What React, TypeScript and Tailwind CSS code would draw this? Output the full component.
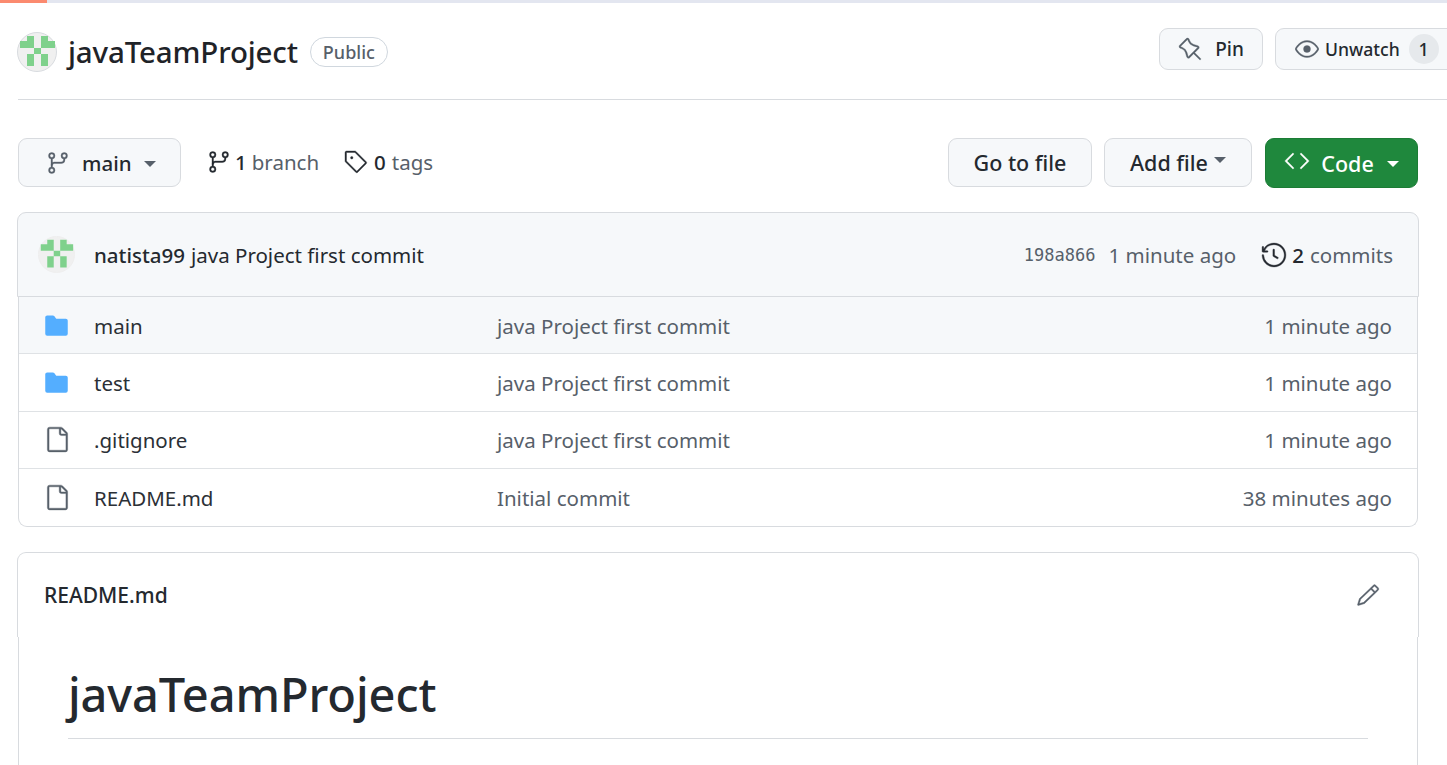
import React from "react";
import { GoGitBranch, GoTag, GoHistory, GoPin, GoEye, GoCode, GoPencil, GoFile, GoFileDirectoryFill } from "react-icons/go";

const Avatar = ({ size, ring = true }: { size: number; ring?: boolean }) => (
  <svg width={size} height={size} viewBox="0 0 40 40" className="shrink-0">
    <circle cx="20" cy="20" r="19.5" fill="#f0f0f0" stroke={ring ? "#d8dbdf" : "#eeeeee"} />
    <path d="M10 4h7v12H3V9h7zM24 4h7v5h7v7H24zM17 16h7v6h-7zM10 22h7v12h-7zM24 22h7v12h-7z" fill="#7fd18c" />
  </svg>
);

const Caret = ({ color = "#24292f" }: { color?: string }) => (
  <span className="inline-block h-0 w-0 border-x-[6px] border-t-[6px] border-x-transparent" style={{ borderTopColor: color }} />
);

const rows = [
  { name: "main", dir: true, msg: "java Project first commit", time: "1 minute ago", shaded: true },
  { name: "test", dir: true, msg: "java Project first commit", time: "1 minute ago" },
  { name: ".gitignore", dir: false, msg: "java Project first commit", time: "1 minute ago" },
  { name: "README.md", dir: false, msg: "Initial commit", time: "38 minutes ago" },
];

const btn = "flex items-center rounded-[9px] border border-[#d8dbdf] bg-[#f6f8fa] text-[#24292f]";
const bold = "stroke-current stroke-[0.35]";

export default function App() {
  return (
    <div className="h-[765px] w-full overflow-hidden bg-white font-['Noto_Sans',sans-serif] text-[20.5px] text-[#24292f]">
      <div className="h-[3px] bg-[#e3e6f0]">
        <div className="h-[3px] w-[47px] bg-[#fb8a6f]" />
      </div>

      <div className="ml-[18px] flex h-[97px] items-start justify-between border-b border-[#d8dbdf] pt-[25px]">
        <div className="ml-[-1px] flex h-[48px] items-center">
          <Avatar size={40} />
          <span className="ml-[11px] text-[29.5px] font-medium leading-none tracking-[-0.15px] text-[#1f2328]">javaTeamProject</span>
          <span className="ml-[12px] flex h-[30px] items-center rounded-full border border-[#d0d7de] px-[12px] text-[18px] font-medium text-[#57606a]">Public</span>
        </div>
        <div className="mr-[-40px] flex shrink-0 gap-[12px]">
          <div className={`${btn} h-[42px] w-[104px] justify-center gap-[12px]`}>
            <GoPin size={25} className={`text-[#57606a] ${bold}`} />
            <span className="text-[19px] font-medium">Pin</span>
          </div>
          <div className={`${btn} h-[42px] w-[212px] pl-[19px]`}>
            <GoEye size={24} className={`text-[#57606a] ${bold}`} />
            <span className="ml-[6px] text-[17.6px] font-medium">Unwatch</span>
            <span className="ml-[9px] flex h-[30px] w-[30px] items-center justify-center rounded-full bg-[#e6e9ec] text-[18px] font-medium">1</span>
          </div>
        </div>
      </div>

      <div className="ml-[17px] mr-[29px] mt-[38px] flex h-[50px] items-start justify-between">
        <div className="flex items-start">
          <div className={`${btn} ml-px h-[49px] w-[163px] pl-[27px]`}>
            <GoGitBranch size={24} className={`text-[#57606a] ${bold}`} />
            <span className="ml-[12px] pt-[1px] font-medium">main</span>
            <span className="ml-[12px] mt-[3px] flex"><Caret color="#57606a" /></span>
          </div>
          <div className="ml-[26px] flex h-[49px] items-center">
            <GoGitBranch size={24} className={`mb-[2px] text-[#24292f] ${bold}`} />
            <span className="ml-[4px] font-medium">1</span>
            <span className="ml-[5px] text-[#57606a]">branch</span>
          </div>
          <div className="ml-[25px] flex h-[49px] items-center">
            <GoTag size={24} className={`mb-[2px] text-[#24292f] ${bold}`} />
            <span className="ml-[6px] font-medium">0</span>
            <span className="ml-[6px] text-[#57606a]">tags</span>
          </div>
        </div>
        <div className="flex gap-[12px] text-[21.5px]">
          <div className={`${btn} h-[49px] w-[144px] justify-center pt-[2px] font-medium`}>Go to file</div>
          <div className={`${btn} h-[49px] w-[148px] justify-center gap-[6px] pt-[2px] font-medium`}>
            <span>Add file</span>
            <span className="mb-[7px] flex"><Caret color="#57606a" /></span>
          </div>
          <div className="ml-px flex h-[50px] w-[153px] items-center justify-center rounded-[9px] border border-[#1c7c35] bg-[#1f883d] pt-[2px] font-medium text-white">
            <GoCode size={26} className={`mb-[7px] ${bold}`} />
            <span className="ml-[11px]">Code</span>
            <span className="ml-[13px] flex"><Caret color="#ffffff" /></span>
          </div>
        </div>
      </div>

      <div className="ml-[17px] mr-[28px] mt-[24px] flex h-[85px] items-center rounded-t-[9px] border border-[#d8dbdf] bg-[#f6f8fa] pl-[20px] pr-[25px]">
        <Avatar size={37} ring={false} />
        <span className="ml-[19px] pt-[1px] font-medium">natista99</span>
        <span className="ml-[6px] pt-[1px]">java Project first commit</span>
        <span className="ml-auto pt-[2px] font-['DejaVu_Sans_Mono',monospace] text-[17px] text-[#57606a]">198a866</span>
        <span className="ml-[13px] pt-[1px] text-[#57606a]">1 minute ago</span>
        <GoHistory size={26} className={`ml-[25px] text-[#24292f] ${bold}`} />
        <span className="ml-[5px] pt-[1px] font-medium">2</span>
        <span className="ml-[6px] pt-[1px] text-[#57606a]">commits</span>
      </div>

      <div className="ml-[18px] mr-[29px] rounded-b-[9px] border-x border-b border-[#d8dbdf]">
        {rows.map((r, i) => (
          <div
            key={r.name}
            className={`flex h-[57.3px] items-center pl-[25px] pr-[25px] ${i < rows.length - 1 ? "border-b border-[#dfe2e5]" : ""} ${r.shaded ? "bg-[#f6f8fa]" : ""}`}
          >
            <span className={`flex w-[50px] shrink-0 ${r.dir ? "" : "pl-[1px]"}`}>
              {r.dir ? (
                <GoFileDirectoryFill size={27} className="ml-[-1px] text-[#54aeff]" />
              ) : (
                <GoFile size={27} className={`ml-[-1px] text-[#57606a] ${bold}`} />
              )}
            </span>
            <span className="w-[403px] shrink-0 pt-[2px] text-[#2b3036]">{r.name}</span>
            <span className="pt-[2px] text-[#57606a]">{r.msg}</span>
            <span className="ml-auto pt-[2px] text-[#57606a]">{r.time}</span>
          </div>
        ))}
      </div>

      <div className="ml-[17px] mr-[28px] mt-[25px] flex h-[85px] items-center justify-between rounded-t-[9px] border-x border-t border-[#d8dbdf] pl-[26px] pr-[38px]">
        <span className="pt-[2px] text-[21px] font-medium">README.md</span>
        <GoPencil size={24} className={`text-[#57606a] ${bold}`} />
      </div>

      <div className="ml-[18px] mr-[29px] h-[200px] border-x border-[#d8dbdf] px-[49px]">
        <h1 className="border-b border-[#d8dbdf] pb-[13px] pt-[26px] text-[47px] font-medium leading-[62px] tracking-[-0.1px] text-[#24292f]">javaTeamProject</h1>
      </div>
    </div>
  );
}
